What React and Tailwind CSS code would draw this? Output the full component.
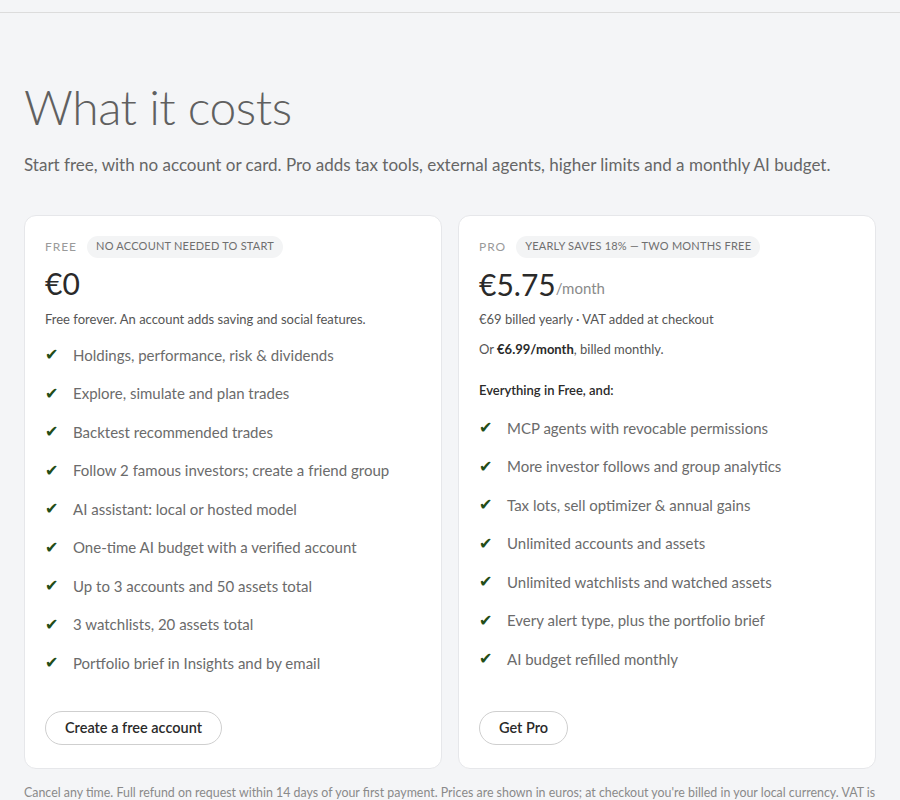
import React from "react";

const freeFeatures = [
  "Holdings, performance, risk & dividends",
  "Explore, simulate and plan trades",
  "Backtest recommended trades",
  "Follow 2 famous investors; create a friend group",
  "AI assistant: local or hosted model",
  "One-time AI budget with a verified account",
  "Up to 3 accounts and 50 assets total",
  "3 watchlists, 20 assets total",
  "Portfolio brief in Insights and by email",
];

const proFeatures = [
  "MCP agents with revocable permissions",
  "More investor follows and group analytics",
  "Tax lots, sell optimizer & annual gains",
  "Unlimited accounts and assets",
  "Unlimited watchlists and watched assets",
  "Every alert type, plus the portfolio brief",
  "AI budget refilled monthly",
];

const FeatureList = ({ items }) => (
  <ul className="flex flex-col gap-[15.5px]">
    {items.map((item) => (
      <li key={item} className="flex items-center h-[23px] text-[15px] text-[#6b6b6b]">
        <span className="w-[28px] text-[16px] text-[#234d17] font-['DejaVu_Sans',sans-serif]">✔</span>
        <span>{item}</span>
      </li>
    ))}
  </ul>
);

const Pill = ({ children }) => (
  <span className="rounded-full bg-[#f3f4f5] px-[9px] h-[22px] flex items-center text-[11px] tracking-[0.02em] text-[#6f6f6f] uppercase">
    {children}
  </span>
);

const App = () => {
  return (
    <div className="min-h-screen bg-[#f4f5f7] font-['Lato',sans-serif] text-[#2a2a2a]">
      <div className="h-[13px] border-b border-[#dcdcdc]" />
      <div className="px-6 pt-[70px]">
        <h1 className="text-[48px] font-light leading-none text-[#606060] tracking-[-0.01em]">
          What it costs
        </h1>
        <p className="mt-[21px] text-[17px] text-[#666]">
          Start free, with no account or card. Pro adds tax tools, external agents, higher limits and a monthly AI budget.
        </p>

        <div className="mt-[37px] grid grid-cols-2 gap-4">
          <div className="flex flex-col rounded-xl border border-[#e6e7ea] bg-white px-5 pt-5 pb-[23px]">
            <div className="flex items-center gap-[10px]">
              <span className="text-[12px] tracking-[0.08em] text-[#9a9a9a]">FREE</span>
              <Pill>No account needed to start</Pill>
            </div>
            <div className="mt-[8px] h-[36px] flex items-center text-[30px] text-[#2a2a2a]">€0</div>
            <p className="mt-[8px] h-[19px] text-[13px] text-[#555]">
              Free forever. An account adds saving and social features.
            </p>
            <div className="mt-[15px]">
              <FeatureList items={freeFeatures} />
            </div>
            <div className="mt-auto pt-[36px]">
              <button className="h-[34px] rounded-full border border-[#cfcfcf] px-[19px] text-[14.5px] font-semibold text-[#2a2a2a]">
                Create a free account
              </button>
            </div>
          </div>

          <div className="flex flex-col rounded-xl border border-[#e6e7ea] bg-white px-5 pt-5 pb-[23px]">
            <div className="flex items-center gap-[10px]">
              <span className="text-[12px] tracking-[0.08em] text-[#9a9a9a]">PRO</span>
              <Pill>Yearly saves 18% — two months free</Pill>
            </div>
            <div className="mt-[8px] h-[36px] flex items-end">
              <span className="text-[30px] leading-[36px] text-[#2a2a2a]">€5.75</span>
              <span className="text-[15px] leading-[28px] text-[#8a8a8a]">/month</span>
            </div>
            <p className="mt-[8px] h-[19px] text-[13px] text-[#555]">€69 billed yearly · VAT added at checkout</p>
            <p className="mt-[11px] h-[19px] text-[13px] text-[#555]">
              Or <span className="font-bold text-[#2a2a2a]">€6.99/month</span>, billed monthly.
            </p>
            <p className="mt-[22px] h-[19px] text-[13px] font-semibold text-[#2a2a2a]">Everything in Free, and:</p>
            <div className="mt-[17px]">
              <FeatureList items={proFeatures} />
            </div>
            <div className="mt-auto pt-[36px]">
              <button className="h-[34px] rounded-full border border-[#cfcfcf] px-[19px] text-[14.5px] font-semibold text-[#2a2a2a]">
                Get Pro
              </button>
            </div>
          </div>
        </div>

        <p className="mt-[15px] pb-10 text-[12.4px] leading-[18px] text-[#8a8a8a]">
          Cancel any time. Full refund on request within 14 days of your first payment. Prices are shown in euros; at checkout you're billed in your local currency. VAT is added at checkout where it applies.
        </p>
      </div>
    </div>
  );
};

export default App;
